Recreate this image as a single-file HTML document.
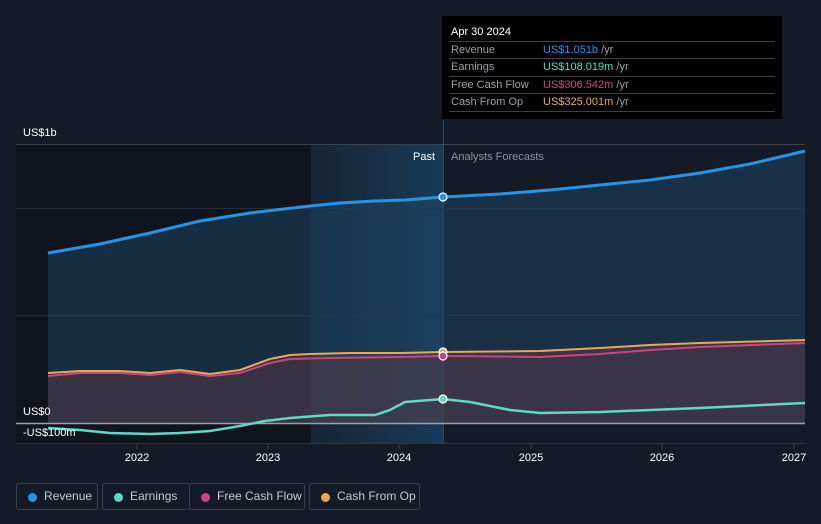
<!DOCTYPE html><html><head><style>
body{margin:0;background:#151b26;font-family:"Liberation Sans",sans-serif;}
.lg{position:absolute;top:483px;height:27px;border:1px solid #3a404b;border-radius:3px;box-sizing:border-box;color:#c5c8cd;font-size:12px;line-height:25px;padding-left:27px}
.lg i{position:absolute;left:11px;top:9px;width:9px;height:9px;border-radius:50%}
</style></head><body>
<div style="position:relative;width:821px;height:524px;overflow:hidden">
<svg width="821" height="524" style="position:absolute;left:0;top:0" font-family="Liberation Sans, sans-serif" stroke-linejoin="round">
<defs><linearGradient id="hl" x1="0" x2="1"><stop offset="0" stop-color="#1a3550" stop-opacity=".4"/><stop offset="1" stop-color="#1a4a70" stop-opacity=".7"/></linearGradient></defs>
<rect x="16" y="145" width="295" height="298" fill="#10151d"/>
<rect x="311" y="145" width="132" height="298" fill="url(#hl)"/>
<line x1="16" y1="144.5" x2="805" y2="144.5" stroke="#3b414b"/>
<line x1="16" y1="208.5" x2="805" y2="208.5" stroke="#262d38"/>
<line x1="16" y1="315.5" x2="805" y2="315.5" stroke="#262d38"/>
<line x1="443.5" y1="120" x2="443.5" y2="443" stroke="#2a4a66"/>
<path d="M48,253 L100,244 150,233 200,221 250,213 275,210 310,206 340,203 375,201 405,200 443,197 500,194 550,190 600,185 650,180 700,173 750,164 805,151 L805,423 48,423Z" fill="#1d4566" fill-opacity=".5"/>
<path d="M48,373 L80,371 120,371 150,373 180,370 210,374 240,370 270,359 290,355 310,354 350,353 400,353 443,352 540,351 600,348 650,345 700,343 805,340 L805,423 48,423Z" fill="#5a3a45" fill-opacity=".5"/>
<path d="M48,253 L100,244 150,233 200,221 250,213 275,210 310,206 340,203 375,201 405,200 443,197 500,194 550,190 600,185 650,180 700,173 750,164 805,151" fill="none" stroke="#2394e6" stroke-width="3"/>
<path d="M48,373 L80,371 120,371 150,373 180,370 210,374 240,370 270,359 290,355 310,354 350,353 400,353 443,352 540,351 600,348 650,345 700,343 805,340" fill="none" stroke="#e8a857" stroke-width="2"/>
<path d="M48,376 L80,373 120,373 150,375 180,372 210,376 240,373 270,363 290,359 330,358 400,357 443,356 540,357 600,354 650,350 700,347 805,343" fill="none" stroke="#c8467e" stroke-width="2"/>
<line x1="16" y1="423.5" x2="805" y2="423.5" stroke="#9aa0a8" stroke-width="1.5"/>
<path d="M48,428 L80,430 110,433 150,434 180,433 210,431 240,426 265,421 290,418 330,415 375,415 390,410 405,402 443,399 470,402 510,410 540,413 600,412 700,408 805,403" fill="none" stroke="#5fd8c5" stroke-width="2.5"/>
<line x1="16" y1="443.5" x2="805" y2="443.5" stroke="#2f3540"/>
<g stroke="#3b414b"><line x1="137" y1="444" x2="137" y2="449"/><line x1="268" y1="444" x2="268" y2="449"/><line x1="399" y1="444" x2="399" y2="449"/><line x1="531" y1="444" x2="531" y2="449"/><line x1="662" y1="444" x2="662" y2="449"/><line x1="794" y1="444" x2="794" y2="449"/></g>
<circle cx="443" cy="197" r="4" fill="#2394e6" stroke="#fff" stroke-width="1.2"/>
<circle cx="443" cy="352" r="4" fill="#e8a857" stroke="#fff" stroke-width="1.2"/>
<circle cx="443" cy="356" r="4" fill="#c8467e" stroke="#fff" stroke-width="1.2"/>
<circle cx="443" cy="399" r="4" fill="#5fd8c5" stroke="#fff" stroke-width="1.2"/>
<g fill="#fff" font-size="11"><text x="23" y="136">US$1b</text><text x="23" y="415">US$0</text><text x="23" y="436">-US$100m</text></g>
<text x="435" y="160" fill="#fff" font-size="11" text-anchor="end">Past</text>
<text x="451" y="160" fill="#8a9099" font-size="11">Analysts Forecasts</text>
<g fill="#fff" font-size="11" text-anchor="middle"><text x="137" y="461">2022</text><text x="268" y="461">2023</text><text x="399" y="461">2024</text><text x="531" y="461">2025</text><text x="662" y="461">2026</text><text x="794" y="461">2027</text></g>
<rect x="442" y="16" width="340" height="103" fill="#000"/>
<text x="451" y="35" fill="#fff" font-size="11">Apr 30 2024</text>
<g stroke="#3a3d42"><line x1="449" y1="41.5" x2="775" y2="41.5"/><line x1="449" y1="58.5" x2="775" y2="58.5"/><line x1="449" y1="76.5" x2="775" y2="76.5"/><line x1="449" y1="93.5" x2="775" y2="93.5"/><line x1="449" y1="111.5" x2="775" y2="111.5"/></g>
<g font-size="11" fill="#9a9ea5"><text x="451" y="53">Revenue</text><text x="451" y="70">Earnings</text><text x="451" y="88">Free Cash Flow</text><text x="451" y="105">Cash From Op</text></g>
<g font-size="11"><text x="543" y="53" fill="#2394e6">US$1.051b <tspan fill="#9a9ea5">/yr</tspan></text><text x="543" y="70" fill="#5fd8c5">US$108.019m <tspan fill="#9a9ea5">/yr</tspan></text><text x="543" y="88" fill="#c8467e">US$306.542m <tspan fill="#9a9ea5">/yr</tspan></text><text x="543" y="105" fill="#e8a857">US$325.001m <tspan fill="#9a9ea5">/yr</tspan></text></g>
</svg>
<div class="lg" style="left:16px;width:82px"><i style="background:#2394e6"></i>Revenue</div>
<div class="lg" style="left:102px;width:88px"><i style="background:#5fd8c5"></i>Earnings</div>
<div class="lg" style="left:189px;width:116px"><i style="background:#c8467e"></i>Free Cash Flow</div>
<div class="lg" style="left:309px;width:111px"><i style="background:#e8a857"></i>Cash From Op</div>
</div></body></html>
